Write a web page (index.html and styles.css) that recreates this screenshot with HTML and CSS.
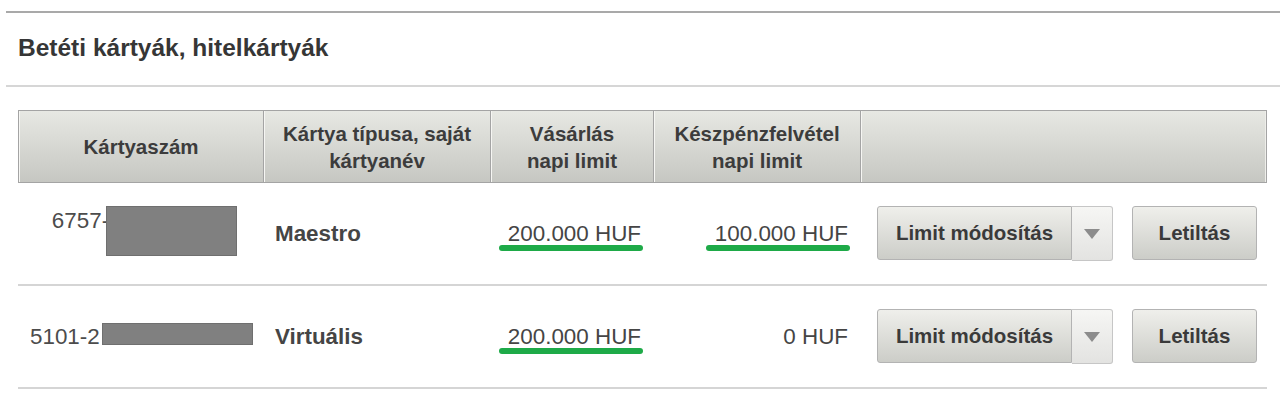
FILE: index.html
```html
<!DOCTYPE html>
<html lang="hu">
<head>
<meta charset="utf-8">
<title>Betéti kártyák, hitelkártyák</title>
<link rel="stylesheet" href="styles.css">
</head>
<body>
<div class="panel">
  <h2 class="panel-title">Betéti kártyák, hitelkártyák</h2>
  <div class="panel-body">
    <table class="cards">
      <colgroup>
        <col class="col-num">
        <col class="col-type">
        <col class="col-buy">
        <col class="col-cash">
        <col class="col-act">
      </colgroup>
      <thead>
        <tr>
          <th>Kártyaszám</th>
          <th>Kártya típusa, saját<br>kártyanév</th>
          <th>Vásárlás<br>napi limit</th>
          <th>Készpénzfelvétel<br>napi limit</th>
          <th></th>
        </tr>
      </thead>
      <tbody>
        <tr>
          <td class="num num-top"><span class="num-text">6757-</span><span class="mask mask-tall"></span></td>
          <td class="type">Maestro</td>
          <td class="amount"><span class="hl">200.000 HUF</span></td>
          <td class="amount"><span class="hl">100.000 HUF</span></td>
          <td class="actions">
            <div class="actions-inner">
              <div class="split">
                <button class="btn btn-main" type="button">Limit módosítás</button>
                <button class="btn btn-caret" type="button" aria-label="További"><span class="caret"></span></button>
              </div>
              <button class="btn btn-block" type="button">Letiltás</button>
            </div>
          </td>
        </tr>
        <tr>
          <td class="num"><span class="num-text">5101-2</span><span class="mask mask-wide"></span></td>
          <td class="type">Virtuális</td>
          <td class="amount"><span class="hl">200.000 HUF</span></td>
          <td class="amount">0 HUF</td>
          <td class="actions">
            <div class="actions-inner">
              <div class="split">
                <button class="btn btn-main" type="button">Limit módosítás</button>
                <button class="btn btn-caret" type="button" aria-label="További"><span class="caret"></span></button>
              </div>
              <button class="btn btn-block" type="button">Letiltás</button>
            </div>
          </td>
        </tr>
      </tbody>
    </table>
  </div>
</div>
</body>
</html>
```
FILE: styles.css
```css
html, body {
  margin: 0;
  padding: 0;
  background: #ffffff;
}

body {
  font-family: "Liberation Sans", Arial, sans-serif;
  color: #444444;
}

.panel {
  margin: 11px 0 0 6px;
  border-top: 2px solid #a9a9a9;
}

.panel-title {
  margin: 0;
  padding: 20px 0 22px 12px;
  font-size: 24.5px;
  line-height: 30px;
  font-weight: bold;
  color: #363636;
  border-bottom: 2px solid #d6d6d6;
}

.panel-body {
  padding: 23px 0 0 12px;
}

.cards {
  width: 1249px;
  table-layout: fixed;
  border-collapse: separate;
  border-spacing: 0;
}

.col-num { width: 245px; }
.col-type { width: 227px; }
.col-buy { width: 163px; }
.col-cash { width: 207px; }
.col-act { width: 407px; }

.cards th {
  height: 71px;
  padding: 0 6px;
  font-size: 20.5px;
  line-height: 27px;
  font-weight: bold;
  color: #3c3c3c;
  text-align: center;
  vertical-align: middle;
  background: linear-gradient(#e7e8e3, #c6c7c2);
  border-top: 1px solid #a4a4a4;
  border-bottom: 1px solid #a4a4a4;
  border-left: 1px solid #a4a4a4;
  box-shadow: inset 1px 0 0 #f6f6f3;
}

.cards th:last-child {
  border-right: 1px solid #a4a4a4;
  box-shadow: inset 1px 0 0 #f6f6f3, inset -1px 0 0 #eeeeea;
}

.cards td {
  height: 101px;
  padding: 0 12px;
  border-bottom: 2px solid #d5d5d5;
  vertical-align: middle;
  font-size: 22.4px;
  line-height: 30px;
  color: #454545;
}

.num {
  text-align: center;
  white-space: nowrap;
}

.cards .num-top {
  height: 95px;
  padding: 0 12px 6px 20px;
}

.num-text {
  color: #4c4c4c;
}

.mask {
  display: inline-block;
  box-sizing: border-box;
  background: #808080;
  border: 1px solid #6f6f6f;
}

.mask-tall {
  width: 131px;
  height: 50px;
  margin-left: -3px;
  vertical-align: top;
}

.mask-wide {
  width: 151px;
  height: 22px;
  margin-left: 2px;
  vertical-align: -1px;
}

.type {
  font-weight: bold;
  color: #333333;
  text-align: left;
}

.amount {
  text-align: right;
  white-space: nowrap;
}

.hl {
  position: relative;
}

.hl::after {
  content: "";
  position: absolute;
  left: -9px;
  right: -2px;
  top: calc(100% - 1px);
  height: 6px;
  border-radius: 3px;
  background: #1eaa48;
}

.cards .actions {
  padding: 0 0 0 17px;
}

.actions-inner {
  display: flex;
  align-items: flex-start;
  gap: 19px;
}

.split {
  display: flex;
  align-items: flex-start;
}

.btn {
  box-sizing: border-box;
  height: 54px;
  margin: 0;
  padding: 0;
  border: 1px solid #b3b3b3;
  border-radius: 3px;
  background: linear-gradient(#efefeb, #cccdc8);
  font-family: "Liberation Sans", Arial, sans-serif;
  font-size: 20.5px;
  font-weight: bold;
  color: #3a3a3a;
  cursor: pointer;
}

.btn-main {
  width: 195px;
  border-radius: 3px 0 0 3px;
}

.btn-caret {
  width: 41px;
  height: 55px;
  border-color: #c6c6c6;
  border-left: none;
  border-radius: 0 3px 3px 0;
  background: linear-gradient(#f6f6f4, #e3e3e1);
  display: flex;
  align-items: center;
  justify-content: center;
}

.caret {
  width: 0;
  height: 0;
  border-left: 8px solid transparent;
  border-right: 8px solid transparent;
  border-top: 10px solid #8c8c8c;
}

.btn-block {
  width: 125px;
}
```
